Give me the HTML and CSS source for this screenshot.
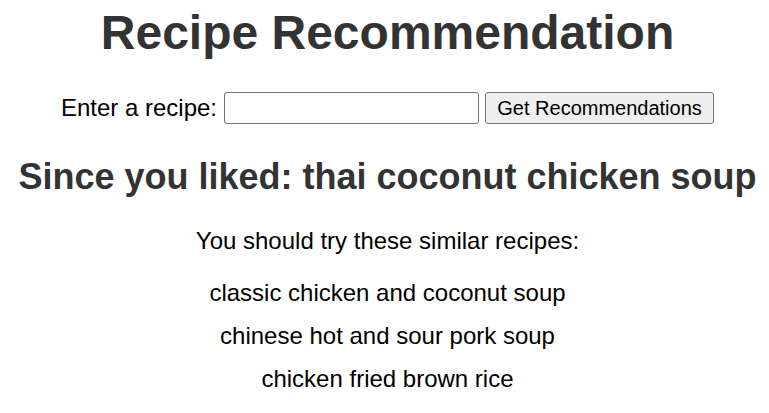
FILE: index.html
```html
<!DOCTYPE html>
<html lang="en">
<head>
<meta charset="utf-8">
<title>Recipe Recommendation</title>
<link rel="stylesheet" href="styles.css">
</head>
<body>
<main class="page">
  <h1 class="title">Recipe Recommendation</h1>
  <form class="search">
    <label class="search-label" for="recipe">Enter a recipe:</label>
    <input class="search-input" id="recipe" type="text">
    <button class="search-button" type="button">Get Recommendations</button>
  </form>
  <h2 class="liked">Since you liked: thai coconut chicken soup</h2>
  <p class="intro">You should try these similar recipes:</p>
  <ul class="results">
    <li class="result">classic chicken and coconut soup</li>
    <li class="result">chinese hot and sour pork soup</li>
    <li class="result">chicken fried brown rice</li>
  </ul>
</main>
</body>
</html>
```
FILE: styles.css
```css
html, body {
  margin: 0;
  padding: 0;
  background: #fff;
}
body {
  font-family: "Liberation Sans", Arial, sans-serif;
  font-size: 24px;
  color: #000;
}
.page {
  display: flex;
  flex-direction: column;
  align-items: center;
  padding: 5px 0 0 6px;
}
.title {
  margin: 0;
  font-size: 48px;
  font-weight: bold;
  color: #333;
  line-height: 55px;
}
.search {
  margin-top: 32px;
  display: flex;
  align-items: center;
  gap: 6px;
}
.search-label {
  font-size: 24px;
  margin-right: 1px;
}
.search-input {
  width: 255px;
  height: 32px;
  box-sizing: border-box;
  border: 1px solid #767676;
  border-radius: 3px;
  padding: 1px 3px;
  font-size: 20px;
  font-family: "Liberation Sans", Arial, sans-serif;
}
.search-button {
  height: 32px;
  box-sizing: border-box;
  width: 229px;
  border: 1px solid #767676;
  border-radius: 3px;
  background: #efefef;
  font-size: 20px;
  font-family: "Liberation Sans", Arial, sans-serif;
  color: #000;
  padding: 0 8px;
}
.liked {
  margin: 32px 0 0;
  font-size: 36px;
  font-weight: bold;
  color: #333;
  line-height: 41px;
}
.intro {
  margin: 30px 0 0;
  line-height: 28px;
}
.results {
  list-style: none;
  margin: 24px 0 0;
  padding: 0;
  display: flex;
  flex-direction: column;
  align-items: center;
  gap: 15px;
}
.result {
  line-height: 28px;
}
```
